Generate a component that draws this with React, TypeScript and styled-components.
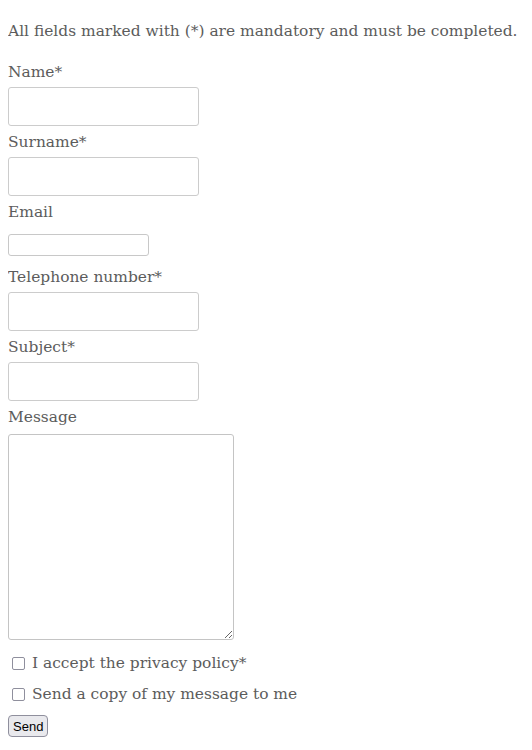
import React from "react";
import styled, { createGlobalStyle } from "styled-components";

const Global = createGlobalStyle`
  body {
    margin: 8px;
    background: #ffffff;
    font-family: "DejaVu Serif", "Liberation Serif", serif;
    font-size: 15.45px;
    color: #5c5c5c;
  }
`;

const Form = styled.form`
  display: flex;
  flex-direction: column;
  align-items: flex-start;
`;

const Intro = styled.p`
  margin: 8px 0 9px;
  line-height: 31px;
  white-space: nowrap;
`;

const Label = styled.label`
  display: block;
  height: 31px;
  line-height: 31px;
  padding-top: 1px;
  box-sizing: border-box;
`;

const TextInput = styled.input`
  box-sizing: border-box;
  width: 191px;
  height: 39px;
  margin: 0;
  border: 1px solid #cccccc;
  border-radius: 3px;
  background: #fff;
`;

const EmailRow = styled.div`
  height: 34px;
  padding-top: 7px;
  box-sizing: border-box;
`;

const EmailInput = styled.input`
  box-sizing: border-box;
  width: 141px;
  height: 22px;
  margin: 0;
  border: 1px solid #c8c8c8;
  border-radius: 3px;
  background: #fff;
`;

const MessageArea = styled.textarea`
  box-sizing: border-box;
  width: 226px;
  height: 206px;
  margin: 2px 0 0;
  border: 1px solid #c4c4c4;
  border-radius: 3px;
  background: #fff;
`;

const CheckList = styled.div`
  margin-top: 8px;
  display: flex;
  flex-direction: column;
`;

const CheckRow = styled.label`
  display: flex;
  align-items: center;
  height: 31px;
  line-height: 31px;
`;

const Check = styled.input`
  appearance: none;
  box-sizing: border-box;
  width: 13px;
  height: 13px;
  margin: 0 7px 0 4px;
  border: 1px solid #8f8f9d;
  border-radius: 2px;
  background: #fff;
`;

const SendButton = styled.button`
  margin-top: 5px;
  height: 22px;
  padding: 1px 4px;
  font-family: "Liberation Sans", Arial, sans-serif;
  font-size: 13px;
  color: #000;
  background: #e9e9ed;
  border: 1px solid #8f8f9d;
  border-radius: 4px;
`;

export default function App() {
  return (
    <>
      <Global />
      <Form onSubmit={(e) => e.preventDefault()}>
        <Intro>All fields marked with (*) are mandatory and must be completed.</Intro>
        <Label htmlFor="name">Name*</Label>
        <TextInput id="name" type="text" />
        <Label htmlFor="surname">Surname*</Label>
        <TextInput id="surname" type="text" />
        <Label htmlFor="email">Email</Label>
        <EmailRow>
          <EmailInput id="email" type="email" />
        </EmailRow>
        <Label htmlFor="tel">Telephone number*</Label>
        <TextInput id="tel" type="tel" />
        <Label htmlFor="subject">Subject*</Label>
        <TextInput id="subject" type="text" />
        <Label htmlFor="message">Message</Label>
        <MessageArea id="message" />
        <CheckList>
          <CheckRow>
            <Check type="checkbox" />
            I accept the privacy policy*
          </CheckRow>
          <CheckRow>
            <Check type="checkbox" />
            Send a copy of my message to me
          </CheckRow>
        </CheckList>
        <SendButton type="submit">Send</SendButton>
      </Form>
    </>
  );
}
